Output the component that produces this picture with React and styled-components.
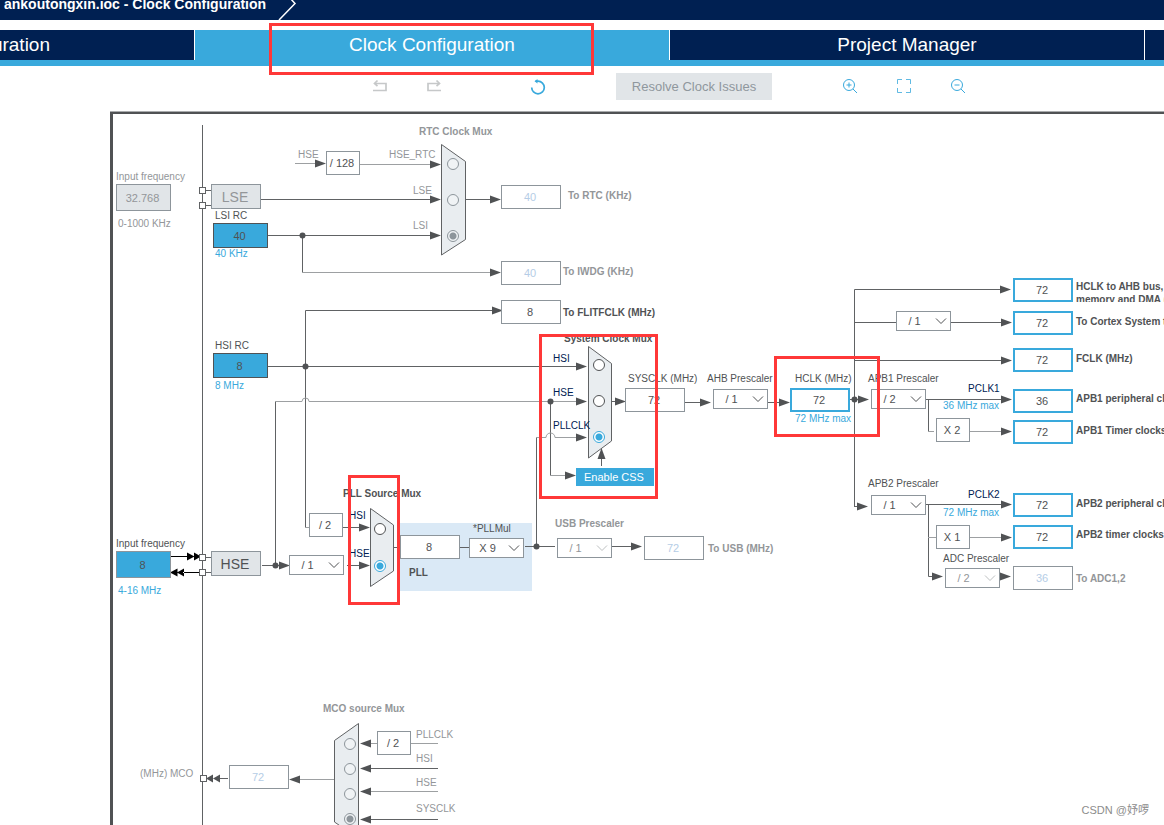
import React from "react";
import styled, { createGlobalStyle, css } from "styled-components";

const color = {
  navy: "#002052",
  blue: "#39a9dc",
  ink: "#505254",
  wire: "#606264",
  softWire: "#9da0a2",
  border: "#8d959b",
  muted: "#939699",
  faint: "#b5cde6",
  panel: "#dae9f6",
  grey: "#e1e5e8",
  mux: "#e9edf0",
  red: "#ff3838",
};

const GlobalStyle = createGlobalStyle`
  * { box-sizing: border-box; }
  body {
    margin: 0;
    background: #fff;
    color: ${color.ink};
    font-family: "Liberation Sans", Arial, "Noto Sans CJK SC", sans-serif;
  }
  button, input, select { font-family: inherit; margin: 0; }
`;

const Page = styled.div`
  position: relative;
  display: flex;
  flex-direction: column;
  width: 100%;
  height: 100vh;
  overflow: hidden;
`;

/* ---------- header ---------- */

const TitleBar = styled.header`
  display: flex;
  align-items: flex-end;
  gap: 12px;
  height: 20px;
  flex: none;
  padding-left: 4px;
  overflow: hidden;
  background: ${color.navy};
`;

const Crumb = styled.h1`
  margin: 0;
  padding-bottom: 7px;
  color: #fff;
  font-size: 14px;
  line-height: 18px;
  font-weight: bold;
  white-space: nowrap;
`;

const CrumbEdge = styled.svg`
  display: block;
  flex: none;
  width: 20px;
  height: 20px;
`;

const Tabs = styled.nav`
  display: grid;
  grid-template-columns: minmax(0, 195fr) minmax(0, 475fr) minmax(0, 475fr) minmax(0, 19fr);
  flex: none;
  height: 36px;
  margin-top: 10px;
  border-bottom: 6px solid ${color.blue};
`;

const Tab = styled.button`
  position: relative;
  display: flex;
  align-items: center;
  justify-content: ${(p) => (p.$cut ? "flex-end" : "center")};
  height: 30px;
  padding: ${(p) => (p.$cut ? "0 144px 0 0" : "0")};
  overflow: ${(p) => (p.$cut ? "hidden" : "visible")};
  border: 0;
  border-right: 1px solid #fff;
  background: ${(p) => (p.$active ? color.blue : color.navy)};
  color: #fff;
  font-size: 19px;
  line-height: 22px;
  white-space: nowrap;

  &:last-child { border-right: 0; }
`;

const TabMark = styled.span`
  position: absolute;
  inset: -7px 75px -15px 74px;
  border: 3px solid ${color.red};
`;

/* ---------- toolbar ---------- */

const Toolbar = styled.div`
  display: flex;
  align-items: center;
  flex: none;
  gap: 62px;
  height: 45px;
  padding: 0 0 4px 364px;
`;

const ToolGroup = styled.div`
  display: flex;
  gap: 22px;
  margin-right: ${(p) => (p.$wide ? "10px" : "0")};
`;

const IconButton = styled.button`
  display: flex;
  align-items: center;
  justify-content: center;
  width: 32px;
  height: 24px;
  padding: 0;
  border: 0;
  background: none;
  color: ${(p) => (p.$off ? "#c6c8c9" : color.blue)};

  svg { display: block; width: 16px; height: 16px; fill: none; stroke: currentColor; }
`;

const ResolveButton = styled.button`
  width: 156px;
  height: 27px;
  padding: 0;
  border: 0;
  background: ${color.grey};
  color: #8f979d;
  font-size: 13px;
  line-height: 16px;
  white-space: nowrap;
`;

/* ---------- diagram ---------- */

const Canvas = styled.main`
  position: relative;
  flex: 1;
  min-height: 0;
  margin: 1px 0 0 110px;
  overflow: hidden;
  border-left: 3px solid ${color.ink};
  border-top: 2px solid ${color.ink};
  box-shadow: 0 -1px 0 #a9abad;
`;

/* Diagram coordinates of the canvas's top left corner. */
const ORIGIN = { x: 113, y: 114 };

const place = css`
  position: absolute;
  left: ${(p) => p.$x - ORIGIN.x}px;
  top: ${(p) => p.$y - ORIGIN.y}px;
`;

const Wires = styled.svg`
  position: absolute;
  left: 0;
  top: 0;
  fill: none;
  stroke: ${color.wire};
`;

const Panel = styled.div`
  ${place}
  width: 132px;
  height: 68px;
  background: ${color.panel};
`;

const tones = {
  ink: color.ink,
  muted: color.muted,
  navy: color.navy,
  blue: color.blue,
};

const Label = styled.label`
  ${place}
  height: ${(p) => (p.$cut ? "8px" : "12px")};
  overflow: ${(p) => (p.$cut ? "hidden" : "visible")};
  color: ${(p) => tones[p.$tone || "ink"]};
  font-size: 10px;
  line-height: 12px;
  font-weight: ${(p) => (p.$bold ? "bold" : "normal")};
  white-space: nowrap;
`;

const fieldKinds = {
  output: css`width: 60px; height: 24px; border: 1px solid ${color.border}; background: #fff; color: ${color.ink};`,
  faint: css`width: 60px; height: 24px; border: 1px solid ${color.border}; background: #fff; color: ${color.faint};`,
  limit: css`width: 60px; height: 24px; border: 2px solid ${color.blue}; background: #fff; color: ${color.ink};`,
  source: css`width: 55px; height: 25px; border: 1px solid ${color.ink}; background: ${color.blue}; color: ${color.ink};`,
  entry: css`width: 55px; height: 27px; border: 1px solid ${color.border}; background: ${color.blue}; color: ${color.ink};`,
  entryOff: css`width: 55px; height: 27px; border: 1px solid ${color.border}; background: ${color.grey}; color: ${color.muted};`,
};

const Field = styled.input`
  ${place}
  padding: 0 2px 0 0;
  border-radius: 0;
  font-size: 11px;
  line-height: 14px;
  text-align: center;
  outline: 0;
  ${(p) => fieldKinds[p.$kind]}
`;

const Factor = styled.div`
  ${place}
  display: flex;
  align-items: center;
  justify-content: center;
  width: 34px;
  height: 24px;
  padding-right: 2px;
  border: 1px solid ${color.border};
  background: #fff;
  font-size: 11px;
  line-height: 14px;
  white-space: pre;
`;

const Oscillator = styled.button`
  ${place}
  width: 50px;
  height: 25px;
  padding: 0 2px 0 0;
  border: 1px solid ${color.border};
  background: ${color.grey};
  color: ${(p) => (p.$off ? color.muted : color.ink)};
  font-size: 14px;
  line-height: 18px;
`;

const PickerBox = styled.div`
  ${place}
  width: 55px;
  height: 20px;
  color: ${(p) => (p.$off ? color.muted : color.ink)};

  svg {
    position: absolute;
    right: 4px;
    top: 6px;
    width: 12px;
    height: 8px;
    fill: none;
    stroke: currentColor;
    opacity: ${(p) => (p.$off ? 0.6 : 1)};
    pointer-events: none;
  }
`;

const PickerSelect = styled.select`
  display: block;
  width: 100%;
  height: 100%;
  padding: 0 18px 0 0;
  appearance: none;
  border: 1px solid ${color.border};
  border-radius: 0;
  background: #fff;
  color: inherit;
  font-size: 11px;
  line-height: 14px;
  text-align: center;
  text-align-last: center;
`;

const Radio = styled.input`
  ${place}
  width: 12px;
  height: 12px;
  appearance: none;
  border: 1px solid ${(p) => (p.$off ? color.border : color.ink)};
  border-radius: 50%;
  background: ${(p) => (p.$off ? "#f0f3f5" : "#fff")};

  &:checked {
    border-color: ${(p) => (p.$off ? color.border : color.blue)};
    background: radial-gradient(
      circle,
      ${(p) => (p.$off ? color.border : color.blue)} 3px,
      ${(p) => (p.$off ? "#f0f3f5" : "#fff")} 4px
    );
  }
`;

const CssButton = styled.button`
  ${place}
  width: 78px;
  height: 18px;
  padding: 0 2px 0 0;
  border: 0;
  background: ${color.blue};
  color: #fff;
  font-size: 11px;
  line-height: 14px;
`;

const Mark = styled.div`
  ${place}
  width: ${(p) => p.$w}px;
  height: ${(p) => p.$h}px;
  border: 3px solid ${color.red};
  pointer-events: none;
`;

const Watermark = styled.footer`
  position: absolute;
  right: 15px;
  bottom: 6px;
  color: #8c8c8c;
  font-size: 11px;
  line-height: 18px;
`;

/* ---------- diagram data ---------- */

const labels = [
  ["Input frequency", 116, 171, { tone: "muted", id: "lse-in" }],
  ["0-1000 KHz", 118, 218, { tone: "muted", id: "lse-in" }],
  ["LSI RC", 215, 210, { id: "lsi" }],
  ["40 KHz", 215, 248, { tone: "blue", id: "lsi" }],
  ["HSI RC", 215, 340, { id: "hsi" }],
  ["8 MHz", 215, 380, { tone: "blue", id: "hsi" }],
  ["Input frequency", 116, 538, { id: "hse-in" }],
  ["4-16 MHz", 118, 585, { tone: "blue", id: "hse-in" }],
  ["HSE", 298, 149, { tone: "muted" }],
  ["HSE_RTC", 389, 149, { tone: "muted", id: "rtc-0" }],
  ["LSE", 413, 185, { tone: "muted", id: "rtc-1" }],
  ["LSI", 413, 220, { tone: "muted", id: "rtc-2" }],
  ["RTC Clock Mux", 419, 126, { tone: "muted", bold: true }],
  ["To RTC (KHz)", 568, 190, { tone: "muted", bold: true, id: "to-rtc" }],
  ["To IWDG (KHz)", 563, 266, { tone: "muted", bold: true, id: "to-iwdg" }],
  ["To FLITFCLK (MHz)", 563, 307, { bold: true, id: "to-flitf" }],
  ["System Clock Mux", 564, 333, { bold: true }],
  ["HSI", 553, 353, { tone: "navy", id: "sys-0" }],
  ["HSE", 553, 387, { tone: "navy", id: "sys-1" }],
  ["PLLCLK", 553, 420, { tone: "navy", id: "sys-2" }],
  ["SYSCLK (MHz)", 628, 373, { id: "sysclk" }],
  ["AHB Prescaler", 707, 373, { id: "ahb" }],
  ["HCLK (MHz)", 795, 373, { id: "hclk" }],
  ["72 MHz max", 795, 413, { tone: "blue", id: "hclk" }],
  ["APB1 Prescaler", 868, 373, { id: "apb1" }],
  ["PCLK1", 968, 383, { tone: "navy", id: "pclk1" }],
  ["36 MHz max", 943, 400, { tone: "blue", id: "pclk1" }],
  ["APB2 Prescaler", 868, 478, { id: "apb2" }],
  ["PCLK2", 968, 489, { tone: "navy", id: "pclk2" }],
  ["72 MHz max", 943, 507, { tone: "blue", id: "pclk2" }],
  ["ADC Prescaler", 943, 553, { id: "adc-div" }],
  ["HCLK to AHB bus, core,", 1076, 281, { bold: true, id: "to-ahb" }],
  ["memory and DMA (MHz)", 1076, 294, { bold: true, cut: true, id: "to-ahb" }],
  ["To Cortex System timer (MHz)", 1076, 316, { bold: true, id: "to-cortex" }],
  ["FCLK (MHz)", 1076, 353, { bold: true, id: "fclk" }],
  ["APB1 peripheral clocks (MHz)", 1076, 393, { bold: true, id: "pclk1" }],
  ["APB1 Timer clocks (MHz)", 1076, 425, { bold: true, id: "apb1-tim" }],
  ["APB2 peripheral clocks (MHz)", 1076, 498, { bold: true, id: "pclk2" }],
  ["APB2 timer clocks (MHz)", 1076, 529, { bold: true, id: "apb2-tim" }],
  ["To ADC1,2", 1076, 573, { tone: "muted", bold: true, id: "to-adc" }],
  ["PLL Source Mux", 343, 488, { bold: true }],
  ["HSI", 349, 510, { tone: "navy", id: "pll-0" }],
  ["HSE", 349, 548, { tone: "navy", id: "pll-1" }],
  ["*PLLMul", 473, 523, { id: "pllmul" }],
  ["PLL", 409, 567, { id: "pll-in", bold: true }],
  ["USB Prescaler", 555, 518, { tone: "muted", bold: true, id: "usb-div" }],
  ["To USB (MHz)", 708, 543, { tone: "muted", bold: true, id: "to-usb" }],
  ["MCO source Mux", 323, 703, { tone: "muted", bold: true }],
  ["PLLCLK", 416, 729, { tone: "muted", id: "mco-0" }],
  ["HSI", 416, 753, { tone: "muted", id: "mco-1" }],
  ["HSE", 416, 777, { tone: "muted", id: "mco-2" }],
  ["SYSCLK", 416, 803, { tone: "muted", id: "mco-3" }],
  ["(MHz) MCO", 140, 768, { tone: "muted", id: "mco" }],
];

const fields = [
  ["lse-in", "32.768", 116, 184, "entryOff"],
  ["lsi", "40", 213, 223, "source"],
  ["hsi", "8", 213, 353, "source"],
  ["hse-in", "8", 116, 551, "entry"],
  ["to-rtc", "40", 501, 185, "faint"],
  ["to-iwdg", "40", 501, 261, "faint"],
  ["to-flitf", "8", 501, 300, "output"],
  ["sysclk", "72", 625, 388, "output"],
  ["hclk", "72", 790, 388, "limit"],
  ["pll-in", "8", 400, 535, "output"],
  ["to-usb", "72", 644, 536, "faint"],
  ["to-ahb", "72", 1013, 278, "limit"],
  ["to-cortex", "72", 1013, 311, "limit"],
  ["fclk", "72", 1013, 348, "limit"],
  ["pclk1", "36", 1013, 389, "limit"],
  ["apb1-tim", "72", 1013, 420, "limit"],
  ["pclk2", "72", 1013, 493, "limit"],
  ["apb2-tim", "72", 1013, 525, "limit"],
  ["to-adc", "36", 1013, 566, "faint"],
  ["mco", "72", 229, 765, "faint"],
];

const pickers = [
  ["hse-div", "/ 1", 289, 555],
  ["pllmul", "X 9", 469, 538],
  ["usb-div", "/ 1", 557, 538, true],
  ["ahb", "/ 1", 713, 389],
  ["cortex-div", "/ 1", 896, 311],
  ["apb1", "/ 2", 871, 389],
  ["apb2", "/ 1", 871, 495],
  ["adc-div", "/ 2", 945, 568, true],
];

const factors = [
  ["/ 128", 326, 151],
  ["/ 2", 309, 513],
  ["X 2", 936, 418],
  ["X 1", 936, 525],
  ["/ 2", 377, 731],
];

const muxes = [
  { name: "rtc", off: true, x: 453, ys: [164, 200, 236], on: 2 },
  { name: "sys", x: 599, ys: [365, 401, 437], on: 2 },
  { name: "pll", x: 380, ys: [529, 566], on: 1 },
  { name: "mco", off: true, x: 350, ys: [744, 769, 794, 819], on: 3 },
];

const muxShapes = [
  "M441.5 144.5L465.5 161.5V239.5L441.5 255Z",
  "M588.5 346.5L611.5 363.5V441L588.5 458Z",
  "M370.5 508.5L393.5 525V571L370.5 586.5Z",
  "M358.5 723.5L334.5 740.5V822L358.5 838.5Z",
];

const wires = [
  "M202.5 125V187M202.5 194V202M202.5 209V554M202.5 561V569M202.5 576V830",
  "M206 190.5H211M206 205.5H211M206 557.5H211M206 572.5H211",
  "M261 199.5H431M268 235.5H431M302.5 235V273M305.5 527V310.5H494",
  "M268 366.5H577M275.5 565V401M550.5 401V475M536.5 547V437",
  "M262 565.5H283M343 527.5H360M347 565.5H360M466 199.5H491",
  "M612 401.5H618M685 402.5H701M768 402.5H781M850 399.5H860",
  "M854.5 506V289.5H1001M854 322.5H896M951 322.5H1002M854 360.5H1002",
  "M926 399.5H1002M928.5 399V432M926 504.5H1002M928.5 504V576.5H933M1000 576.5H1002",
  "M394 547.5H400M460 547.5H469M525 546.5H555M612 546.5H632",
  "M370 768.5H438M370 819.5H438M219 778.5H228M601.5 459V466M854 506.5H858",
];

const softWires = [
  "M295 163.5H317M360 164.5H431M302 272.5H491",
  "M275 401.5H302A3.5 3.5 0 0 1 309 401.5H577",
  "M536 437.5H546A4.5 4.5 0 0 1 555 437.5H577",
  "M550 475.5H566M928 431.5H934M970 431.5H1002M928 537.5H936M970 537.5H1002",
  "M305 527.5H309M298 779.5H334M369 743.5H377M411 743.5H438M369 791.5H438",
];

/* Arrow heads: tip x, tip y and the direction they point in. */
const arrows = [
  [326, 163.5], [441, 164.5], [441, 199.5], [441, 235.5], [501, 199.5], [501, 272.5], [503, 310.5],
  [587, 366.5], [587, 401.5], [587, 437.5], [576, 475.5], [626, 401.5], [711, 402.5], [790, 402.5],
  [869, 399.5], [1011, 289.5], [1012, 322.5], [1012, 360.5], [1012, 399.5], [1012, 431.5],
  [868, 506.5], [1012, 504.5], [1012, 537.5], [943, 576.5], [1011, 576.5], [370, 527.5],
  [370, 565.5], [290, 565.5], [642, 546.5],
  [289, 779.5, 180], [360, 743.5, 180], [360, 768.5, 180], [360, 791.5, 180], [360, 819.5, 180],
  [601.5, 448, -90],
];

const pins = [[202.5, 190.5], [202.5, 205.5], [202.5, 557.5], [202.5, 572.5], [203.5, 778.5]];
const dots = [[302.5, 235.5], [305.5, 366.5], [275.5, 565.5], [550.5, 401.5], [536.5, 546.5], [854.5, 399.5]];

const marks = [
  [348, 475, 52, 130],
  [539, 334, 119, 165],
  [774, 356, 106, 81],
];

function Picker({ id, value, x, y, off }) {
  return (
    <PickerBox $x={x} $y={y} $off={off}>
      <PickerSelect id={id} aria-label={id} defaultValue={value}>
        <option>{value}</option>
      </PickerSelect>
      <svg viewBox="0 0 12 8" aria-hidden="true">
        <path d="M1 1.500L6 6.500L11 1.500" />
      </svg>
    </PickerBox>
  );
}

function Schematic() {
  return (
    <Wires width="1200" height="740" viewBox={`${ORIGIN.x} ${ORIGIN.y} 1200 740`} aria-hidden="true">
      <path d={wires.join("")} />
      <path d={softWires.join("")} stroke={color.softWire} />
      {muxShapes.map((d) => (
        <path key={d} d={d} fill={color.mux} />
      ))}
      <g fill={color.ink} stroke="none">
        {arrows.map(([x, y, turn = 0]) => (
          <path key={`${x}-${y}`} d="M0 0L-11 -4V4Z" transform={`translate(${x} ${y}) rotate(${turn})`} />
        ))}
        {dots.map(([x, y]) => (
          <circle key={`${x}-${y}`} cx={x} cy={y} r="3" />
        ))}
        <path d="M213 778.500L220 774.500V782.500ZM206 778.500L213 774.500V782.500Z" />
      </g>
      <g fill="#000" stroke="none">
        <path d="M171 556H188V557H171ZM187 552.500L194.500 556.500L187 560.500ZM194 552.500L201 556.500L194 560.500Z" />
        <path d="M183 572H199V573H183ZM177.500 568.500L170 572.500L177.500 576.500ZM184 568.500L177 572.500L184 576.500Z" />
      </g>
      {pins.map(([x, y]) => (
        <rect key={`${x}-${y}`} x={x - 3} y={y - 3} width="6" height="6" fill="#fff" />
      ))}
    </Wires>
  );
}

export default function App() {
  return (
    <Page>
      <GlobalStyle />
      <TitleBar>
        <Crumb>ankoutongxin.ioc - Clock Configuration</Crumb>
        <CrumbEdge viewBox="0 0 20 20" aria-hidden="true">
          <path d="M12 -2L17 3.500L1 20" fill="none" stroke="#fff" strokeWidth="1.500" />
        </CrumbEdge>
      </TitleBar>

      <Tabs>
        <Tab $cut>Pinout &amp; Configuration</Tab>
        <Tab $active>
          Clock Configuration
          <TabMark />
        </Tab>
        <Tab>Project Manager</Tab>
        <Tab aria-label="Tools" />
      </Tabs>

      <Toolbar>
        <ToolGroup $wide>
          <IconButton $off aria-label="Undo">
            <svg viewBox="0 0 16 16" strokeWidth="1.700">
              <path d="M1 11.500H14V4.500H3" />
              <path d="M5.500 1.500L2.500 4.500L5.500 7" />
            </svg>
          </IconButton>
          <IconButton $off aria-label="Redo">
            <svg viewBox="0 0 16 16" strokeWidth="1.700">
              <path d="M15 11.500H2V4.500H13" />
              <path d="M10.500 1.500L13.500 4.500L10.500 7" />
            </svg>
          </IconButton>
        </ToolGroup>
        <ToolGroup>
          <IconButton aria-label="Reset">
            <svg viewBox="0 0 16 16" strokeWidth="1.700">
              <path d="M1.700 8.500A6.300 6.300 0 1 0 8 2.200H5.500" />
              <path d="M7.500 0L4.500 2.200L7.500 4.600" fill="currentColor" stroke="none" />
            </svg>
          </IconButton>
        </ToolGroup>
        <ResolveButton>Resolve Clock Issues</ResolveButton>
        <ToolGroup>
          <IconButton aria-label="Zoom in">
            <svg viewBox="0 0 16 16">
              <circle cx="7" cy="6" r="5.500" />
              <path d="M11 10L15 14M4.500 6H9.500M7 3.500V8.500" />
            </svg>
          </IconButton>
          <IconButton aria-label="Fit to window">
            <svg viewBox="0 0 16 16">
              <path d="M1.500 5V0.500H6M10 0.500H14.500V5M14.500 9V13.500H10M6 13.500H1.500V9" opacity="0.8" />
            </svg>
          </IconButton>
          <IconButton aria-label="Zoom out">
            <svg viewBox="0 0 16 16">
              <circle cx="7" cy="6" r="5.500" />
              <path d="M11 10L15 14M4.500 6H9.500" />
            </svg>
          </IconButton>
        </ToolGroup>
      </Toolbar>

      <Canvas>
        <Panel $x={400} $y={523} />
        <Schematic />
        {labels.map(([text, x, y, o]) => (
          <Label key={`${x}-${y}`} as={o.id ? "label" : "span"} htmlFor={o.id} $x={x} $y={y} $tone={o.tone} $bold={o.bold} $cut={o.cut}>
            {text}
          </Label>
        ))}
        {fields.map(([id, value, x, y, kind]) => (
          <Field key={id} id={id} $x={x} $y={y} $kind={kind} defaultValue={value} />
        ))}
        {factors.map(([text, x, y]) => (
          <Factor key={`${x}-${y}`} $x={x} $y={y}>{text}</Factor>
        ))}
        {pickers.map(([id, value, x, y, off]) => (
          <Picker key={id} id={id} value={value} x={x} y={y} off={off} />
        ))}
        {muxes.map((m) =>
          m.ys.map((y, i) => (
            <Radio
              key={`${m.name}-${i}`}
              id={`${m.name}-${i}`}
              type="radio"
              name={m.name}
              defaultChecked={i === m.on}
              $x={m.x - 6}
              $y={y - 6}
              $off={m.off}
            />
          ))
        )}
        <Oscillator $x={211} $y={184} $off>LSE</Oscillator>
        <Oscillator $x={211} $y={551}>HSE</Oscillator>
        <CssButton $x={576} $y={468}>Enable CSS</CssButton>
        {marks.map(([x, y, w, h]) => (
          <Mark key={x} $x={x} $y={y} $w={w} $h={h} />
        ))}
      </Canvas>

      <Watermark>CSDN @妤啰</Watermark>
    </Page>
  );
}
